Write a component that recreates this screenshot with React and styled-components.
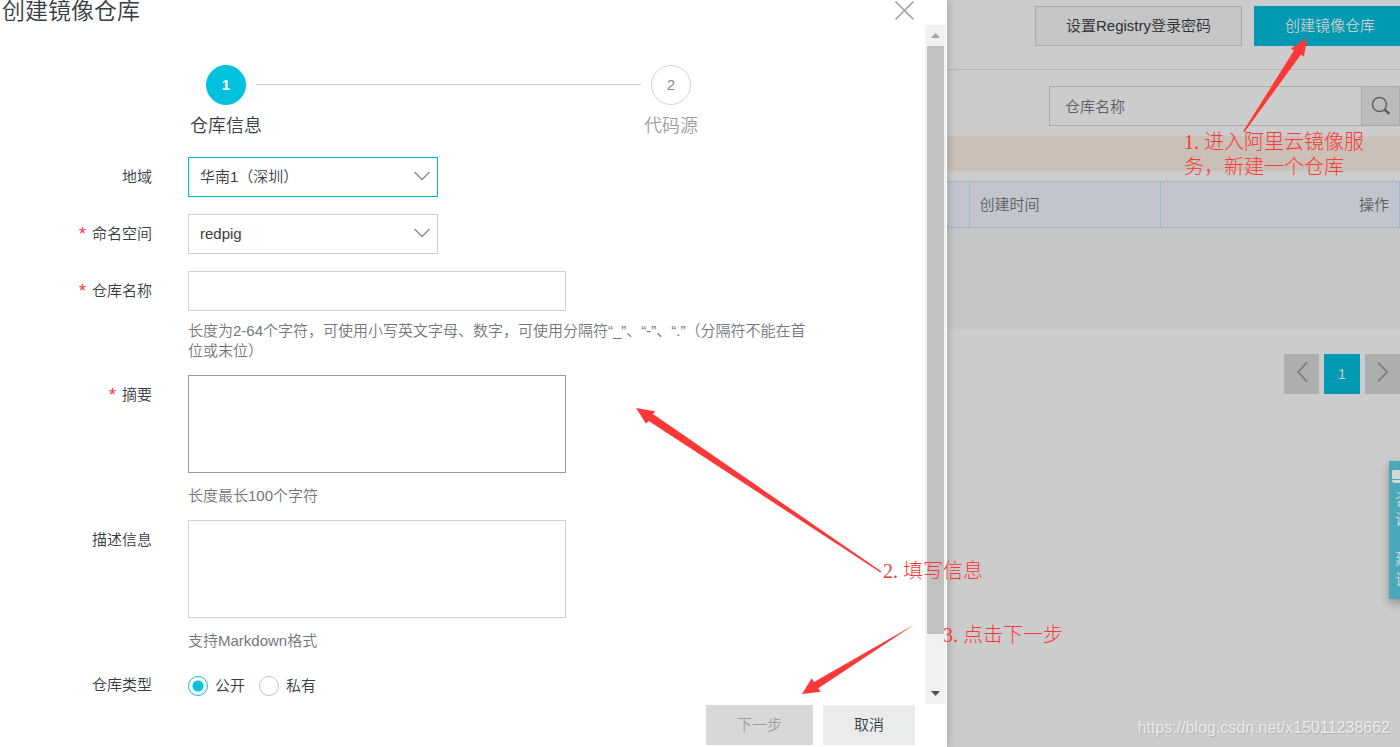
import React, { useState } from 'react';
import styled, { createGlobalStyle, ThemeProvider } from 'styled-components';

const theme = {
  primary: '#00c1de',
  primaryDim: '#009ab2',
  text: '#373d41',
  hint: '#73777a',
  muted: '#9b9ea0',
  border: '#d2d2d2',
  note: '#fc3838',
};

const GlobalStyle = createGlobalStyle`
  * {
    box-sizing: border-box;
  }

  body {
    margin: 0;
    color: ${theme.text};
    font-family: 'Liberation Sans', 'Noto Sans CJK SC', sans-serif;
    font-size: 15px;
    font-weight: 350;
    line-height: 20px;
    text-spacing-trim: space-all;
  }

  button,
  input,
  select,
  textarea {
    font: inherit;
    color: inherit;
    border-radius: 0;
    outline: none;
  }
`;

const Page = styled.div`
  position: relative;
  display: grid;
  grid-template-columns: minmax(0, 947fr) minmax(0, 453fr);
  height: 100vh;
  overflow: hidden;
`;

/* dialog */

const Dialog = styled.section`
  display: flex;
  flex-direction: column;
  min-height: 0;
  padding-right: 1px;
  background: #fff;
  box-shadow: 0 0 9px rgba(0, 0, 0, 0.25);
  z-index: 1;
`;

const DialogHeader = styled.header`
  display: flex;
  justify-content: space-between;
  height: 25px;
  padding: 0 31px 0 2px;
`;

const DialogTitle = styled.h1`
  margin: 0;
  font-size: 23px;
  font-weight: 350;
  line-height: 22px;
`;

const CloseButton = styled.button`
  display: flex;
  height: 21px;
  padding: 0;
  border: 0;
  background: none;
  color: ${(props) => props.theme.muted};
`;

const DialogMain = styled.div`
  display: flex;
  flex: 1;
  min-height: 0;
`;

const DialogBody = styled.div`
  flex: 1;
  min-width: 0;
  padding-top: 40px;
  overflow: hidden;
`;

const DialogFooter = styled.footer`
  display: flex;
  justify-content: flex-end;
  gap: 10px;
  height: 43px;
  padding: 1px 31px 0 0;
`;

const Button = styled.button`
  height: 40px;
  padding: 0 30px;
  border: 1px solid #eaeceb;
  background: #eaeceb;
  white-space: nowrap;

  &:disabled {
    border-color: #d7d8da;
    background: #d7d8da;
    color: ${(props) => props.theme.muted};
  }
`;

const ScrollBar = styled.div`
  display: flex;
  flex-direction: column;
  width: 21px;
  background: #f1f1f1;
`;

const ScrollArrow = styled.div`
  display: flex;
  align-items: center;
  justify-content: center;
  height: 21px;
  color: ${(props) => props.$color};
`;

const ScrollTrack = styled.div`
  flex: 1;
  padding: 0 2px;
`;

const ScrollThumb = styled.div`
  height: calc(100% - 49px);
  background: #c1c1c1;
`;

/* steps */

const Steps = styled.ol`
  display: flex;
  margin: 0 234px 18px 206px;
  padding: 0;
  list-style: none;
`;

const Step = styled.li`
  display: flex;
  flex-direction: column;
  align-items: center;
  width: 40px;
  color: ${(props) => (props.$active ? props.theme.text : props.theme.muted)};
`;

const StepCircle = styled.span`
  width: 40px;
  height: 40px;
  border: 1px solid ${(props) => (props.$active ? props.theme.primary : props.theme.border)};
  border-radius: 50%;
  background: ${(props) => (props.$active ? props.theme.primary : '#fff')};
  color: ${(props) => (props.$active ? '#fff' : '#888')};
  font-weight: ${(props) => (props.$active ? 700 : 350)};
  line-height: 38px;
  text-align: center;
`;

const StepLabel = styled.span`
  margin-top: 8px;
  font-size: 18px;
  line-height: 26px;
  white-space: nowrap;
`;

const StepLine = styled.li`
  flex: 1;
  height: 1px;
  margin: 19px 10px 0;
  background: #ccc;
`;

/* form */

const FormRow = styled.div`
  display: grid;
  grid-template-columns: 152px minmax(0, 624px);
  column-gap: 36px;
  padding-bottom: ${(props) => (props.$hint ? 14 : 17)}px;
`;

const Label = styled.label`
  display: flex;
  justify-content: flex-end;
  height: 40px;
  line-height: 40px;
`;

const Required = styled.span`
  margin-right: 6px;
  color: #f33;
  font-size: 18px;
`;

const SelectWrap = styled.div`
  position: relative;
  width: 250px;
  height: 40px;

  svg {
    position: absolute;
    top: 13px;
    right: 7px;
    color: #85898b;
    pointer-events: none;
  }
`;

const Select = styled.select`
  width: 100%;
  height: 100%;
  padding: 0 30px 0 11px;
  border: 1px solid ${(props) => (props.$active ? '#00b7d3' : props.theme.border)};
  background: #fff;
  appearance: none;
`;

const TextInput = styled.input`
  display: block;
  width: 378px;
  height: 40px;
  padding: 0 11px;
  border: 1px solid ${(props) => props.theme.border};
`;

const TextArea = styled.textarea`
  display: block;
  width: 378px;
  height: 98px;
  margin-bottom: 13px;
  padding: 8px 11px;
  border: 1px solid ${(props) => (props.$active ? '#999c9f' : props.theme.border)};
  resize: none;
`;

const Hint = styled.p`
  margin: 0;
  color: ${(props) => props.theme.hint};

  ${TextInput} + & {
    margin-top: 10px;
  }
`;

const RadioGroup = styled.div`
  display: flex;
  align-items: center;
  gap: 14px;
  height: 42px;
`;

const RadioLabel = styled.label`
  display: flex;
  align-items: center;
  gap: 7px;
`;

const Radio = styled.input`
  width: 20px;
  height: 20px;
  margin: 0;
  border: 1px solid #c4c4c4;
  border-radius: 50%;
  appearance: none;

  &:checked {
    border-color: ${(props) => props.theme.primary};
    background: radial-gradient(circle, ${(props) => props.theme.primary} 5px, #fff 6px);
  }
`;

/* page behind the dialog */

const Console = styled.main`
  position: relative;
  min-width: 0;
  background: #ccc;
  overflow: hidden;
`;

const TopBar = styled.div`
  display: flex;
  justify-content: flex-end;
  gap: 12px;
  height: 70px;
  margin-right: -6px;
  padding-top: 6px;
  border-bottom: 1px solid #b5b6b7;
`;

const DimButton = styled(Button)`
  border-color: ${(props) => (props.$primary ? props.theme.primaryDim : '#a9abac')};
  background: ${(props) => (props.$primary ? props.theme.primaryDim : '#c5c5c5')};
  color: ${(props) => (props.$primary ? '#ccc' : '#2c3134')};
`;

const SearchBar = styled.form`
  display: flex;
  justify-content: flex-end;
  margin: 16px 0 10px;
`;

const SearchInput = styled.input`
  width: 313px;
  height: 40px;
  padding: 0 15px;
  border: 1px solid #a9abac;
  background: #ccc;

  &::placeholder {
    color: #5c6062;
    opacity: 1;
  }
`;

const SearchButton = styled.button`
  display: flex;
  align-items: center;
  justify-content: center;
  width: 39px;
  height: 40px;
  margin-left: -1px;
  padding: 0;
  border: 1px solid #a9abac;
  background: #bbbdbc;
  color: #5c6062;
`;

const Banner = styled.div`
  height: 35px;
  margin-bottom: 10px;
  background: #cac0b7;
`;

const Table = styled.table`
  width: 100%;
  border-collapse: collapse;
  table-layout: fixed;

  th {
    height: 46px;
    padding: 0 10px;
    border: 1px solid #a3b5cb;
    background: #c2c4ce;
    color: #5c6062;
    font-weight: 350;
    text-align: left;
  }

  th:first-child {
    width: 22px;
    border-left: 0;
  }

  th:nth-child(2) {
    width: 191px;
  }

  th:last-child {
    text-align: right;
  }

  td {
    height: 101px;
    padding: 0;
    background: #c5c6c8;
  }
`;

const Pagination = styled.nav`
  display: flex;
  justify-content: flex-end;
  gap: 5px;
  margin-top: 25px;
`;

const PageButton = styled.button`
  display: flex;
  align-items: center;
  justify-content: center;
  width: ${(props) => (props.$current ? 36 : 35)}px;
  height: 40px;
  padding: 0;
  border: 0;
  background: ${(props) => (props.$current ? props.theme.primaryDim : '#acaeb0')};
  color: ${(props) => (props.$current ? '#ccc' : '#77797b')};

  svg {
    margin-bottom: 3px;
  }
`;

const FeedbackTab = styled.a`
  position: absolute;
  top: 461px;
  right: -21px;
  display: flex;
  flex-direction: column;
  gap: 20px;
  width: 32px;
  height: 138px;
  padding: 9px 9px 0 6px;
  background: #4aa8bb;
  box-shadow: 0 4px 10px rgba(0, 0, 0, 0.3);
  color: #d3d7d8;
  font-size: 16px;
  text-decoration: none;

  svg {
    flex: none;
    margin: 0 0 -14px -3px;
  }
`;

const Watermark = styled.div`
  position: absolute;
  right: 10px;
  bottom: 9px;
  color: rgba(255, 255, 255, 0.7);
  font-size: 16px;
  text-shadow: 1px 1px 1px rgba(0, 0, 0, 0.15);
`;

/* notes drawn over everything */

const Arrows = styled.svg`
  position: absolute;
  top: 0;
  left: 0;
  z-index: 2;
  fill: ${(props) => props.theme.note};
  pointer-events: none;
`;

const Note = styled.p`
  position: absolute;
  top: ${(props) => props.$top}px;
  left: ${(props) => props.$left}px;
  z-index: 2;
  width: 184px;
  margin: 0;
  color: ${(props) => props.theme.note};
  font-family: 'Liberation Serif', 'Noto Sans CJK SC', serif;
  font-size: 20px;
  font-weight: 300;
  line-height: 25px;
  pointer-events: none;
`;

const Chevron = ({ width = 18, height = 12, d = 'M1.5 2 9 9.5 16.5 2', strokeWidth = 1.3 }) => (
  <svg width={width} height={height} fill="none" stroke="currentColor" strokeWidth={strokeWidth} aria-hidden="true">
    <path d={d} />
  </svg>
);

const SelectField = ({ id, label, required, active, options }) => (
  <FormRow>
    <Label htmlFor={id}>
      {required && <Required>*</Required>}
      {label}
    </Label>
    <SelectWrap>
      <Select id={id} $active={active}>
        {options.map((option) => (
          <option key={option}>{option}</option>
        ))}
      </Select>
      <Chevron />
    </SelectWrap>
  </FormRow>
);

const TextField = ({ id, label, required, active, hint, multiline }) => (
  <FormRow $hint>
    <Label htmlFor={id}>
      {required && <Required>*</Required>}
      {label}
    </Label>
    <div>
      {multiline ? <TextArea id={id} $active={active} /> : <TextInput id={id} type="text" />}
      <Hint>{hint}</Hint>
    </div>
  </FormRow>
);

const CreateDialog = () => {
  const [type, setType] = useState('公开');

  return (
    <Dialog role="dialog" aria-labelledby="dialog-title">
      <DialogHeader>
        <DialogTitle id="dialog-title">创建镜像仓库</DialogTitle>
        <CloseButton type="button" aria-label="关闭">
          <svg width="21" height="21" fill="none" stroke="currentColor" strokeWidth="1.6">
            <path d="M1.5 1.5 19.5 19.5M19.5 1.5 1.5 19.5" />
          </svg>
        </CloseButton>
      </DialogHeader>
      <DialogMain>
        <DialogBody>
          <Steps>
            <Step $active>
              <StepCircle $active>1</StepCircle>
              <StepLabel>仓库信息</StepLabel>
            </Step>
            <StepLine aria-hidden="true" />
            <Step>
              <StepCircle>2</StepCircle>
              <StepLabel>代码源</StepLabel>
            </Step>
          </Steps>
          <SelectField id="region" label="地域" active options={['华南1（深圳）']} />
          <SelectField id="namespace" label="命名空间" required options={['redpig']} />
          <TextField
            id="name"
            label="仓库名称"
            required
            hint="长度为2-64个字符，可使用小写英文字母、数字，可使用分隔符“_”、“-”、“.”（分隔符不能在首位或末位）"
          />
          <TextField id="summary" label="摘要" required active multiline hint="长度最长100个字符" />
          <TextField id="description" label="描述信息" multiline hint="支持Markdown格式" />
          <FormRow>
            <Label as="span" id="type-label">仓库类型</Label>
            <RadioGroup role="radiogroup" aria-labelledby="type-label">
              {['公开', '私有'].map((value) => (
                <RadioLabel key={value}>
                  <Radio type="radio" name="type" checked={type === value} onChange={() => setType(value)} />
                  {value}
                </RadioLabel>
              ))}
            </RadioGroup>
          </FormRow>
        </DialogBody>
        <ScrollBar aria-hidden="true">
          <ScrollArrow $color="#a3a3a3">
            <svg width="9" height="5" fill="currentColor"><path d="M0 5 4.5 0 9 5z" /></svg>
          </ScrollArrow>
          <ScrollTrack>
            <ScrollThumb />
          </ScrollTrack>
          <ScrollArrow $color="#505050">
            <svg width="9" height="5" fill="currentColor"><path d="M0 0 4.5 5 9 0z" /></svg>
          </ScrollArrow>
        </ScrollBar>
      </DialogMain>
      <DialogFooter>
        <Button type="button" disabled>下一步</Button>
        <Button type="button">取消</Button>
      </DialogFooter>
    </Dialog>
  );
};

const RepositoryList = () => (
  <Console>
    <TopBar>
      <DimButton type="button">设置Registry登录密码</DimButton>
      <DimButton type="button" $primary>创建镜像仓库</DimButton>
    </TopBar>
    <SearchBar onSubmit={(e) => e.preventDefault()}>
      <SearchInput type="text" placeholder="仓库名称" aria-label="仓库名称" />
      <SearchButton type="submit" aria-label="搜索">
        <svg width="20" height="20" fill="none" stroke="currentColor">
          <circle cx="8.5" cy="8.5" r="7" strokeWidth="1.4" />
          <path d="M13.5 13.5 18.5 18" strokeWidth="2.4" />
        </svg>
      </SearchButton>
    </SearchBar>
    <Banner />
    <Table>
      <thead>
        <tr>
          <th aria-label="仓库" />
          <th>创建时间</th>
          <th>操作</th>
        </tr>
      </thead>
      <tbody>
        <tr>
          <td colSpan={3} />
        </tr>
      </tbody>
    </Table>
    <Pagination>
      <PageButton type="button" aria-label="上一页">
        <Chevron width={12} height={22} d="M11 1.5 2 11 11 20.5" strokeWidth={1.5} />
      </PageButton>
      <PageButton type="button" $current>1</PageButton>
      <PageButton type="button" aria-label="下一页">
        <Chevron width={12} height={22} d="M1 1.5 10 11 1 20.5" strokeWidth={1.5} />
      </PageButton>
    </Pagination>
    <FeedbackTab href="#feedback">
      <svg width="22" height="14" fill="currentColor">
        <rect width="22" height="9" rx="1" />
        <path d="M0 10h22v1q0 2-2 2H3q-3 0-3-3z" />
      </svg>
      <span>咨询</span>
      <span>建议</span>
    </FeedbackTab>
    <Watermark>https://blog.csdn.net/x15011238662</Watermark>
  </Console>
);

const App = () => (
  <ThemeProvider theme={theme}>
    <GlobalStyle />
    <Page>
      <CreateDialog />
      <RepositoryList />
      <Arrows width="1400" height="747" aria-hidden="true">
        <path d="M1307 38 1291 48.5 1294 50.5 1243 131.5 1244.5 132 1301 54.5 1304 56.5z" />
        <path d="M636 408 655 411.3 653 414 881.5 571.5 880.5 572.5 648.7 421 646 423.7z" />
        <path d="M802 694 811.7 678.3 814 682 914.5 624.5 818.3 688.3 820.7 691.7z" />
      </Arrows>
      <Note $top={130} $left={1184}>1. 进入阿里云镜像服务，新建一个仓库</Note>
      <Note $top={559} $left={883}>2. 填写信息</Note>
      <Note $top={623} $left={943}>3. 点击下一步</Note>
    </Page>
  </ThemeProvider>
);

export default App;
